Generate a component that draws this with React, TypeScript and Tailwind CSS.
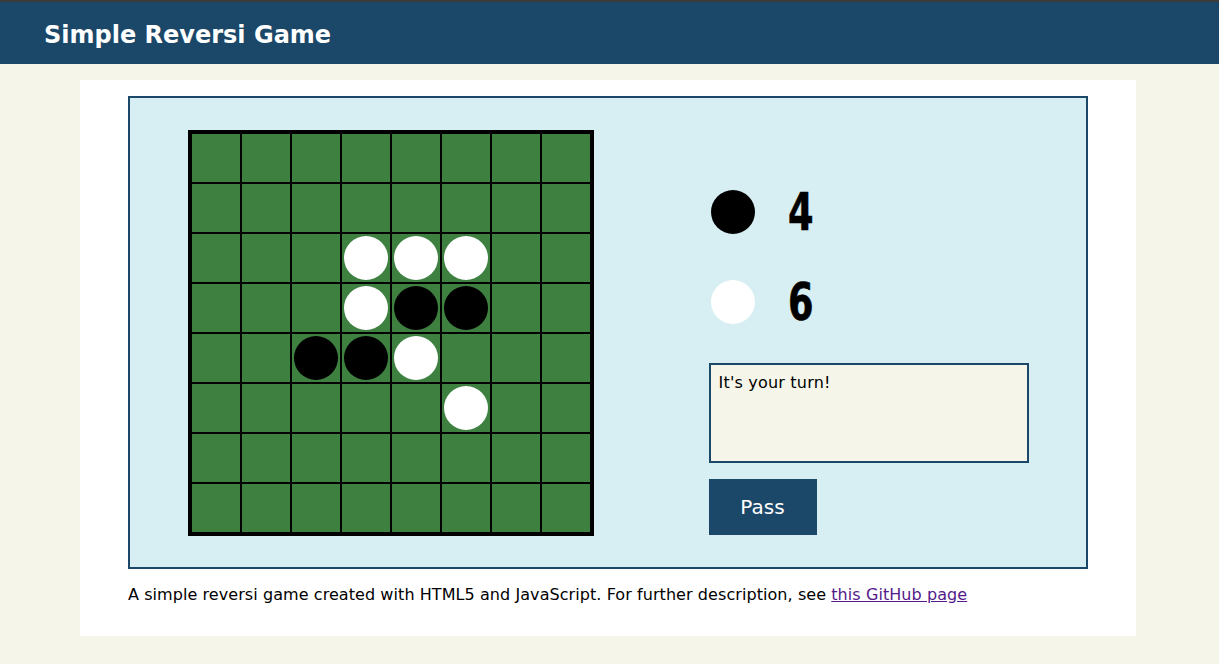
import React from "react";

const board: number[][] = [
  [0, 0, 0, 0, 0, 0, 0, 0],
  [0, 0, 0, 0, 0, 0, 0, 0],
  [0, 0, 0, 2, 2, 2, 0, 0],
  [0, 0, 0, 2, 1, 1, 0, 0],
  [0, 0, 1, 1, 2, 0, 0, 0],
  [0, 0, 0, 0, 0, 2, 0, 0],
  [0, 0, 0, 0, 0, 0, 0, 0],
  [0, 0, 0, 0, 0, 0, 0, 0],
];

const font = { fontFamily: '"DejaVu Sans", Verdana, sans-serif' };
const numFont = { fontFamily: '"DejaVu Sans Condensed", "DejaVu Sans", sans-serif' };

export default function App() {
  return (
    <div className="min-h-[664px] bg-[#f5f5e9]" style={font}>
      <div className="h-[2px] bg-[#3c3c3c]" />
      <header className="h-[62px] bg-[#1b4769] flex items-center pl-[44px] pt-[4px]">
        <h1 className="text-white font-bold text-[24px] leading-none">Simple Reversi Game</h1>
      </header>
      <div className="ml-[80px] mt-[16px] w-[1056px] h-[556px] bg-white px-[48px] pt-[16px]">
        <div className="border-2 border-[#1b4769] bg-[#d7eef3] h-[473px] flex justify-around items-start pt-[32px]">
          <div className="border-4 border-black bg-black grid grid-cols-8 gap-[2px]">
            {board.flat().map((v, i) => (
              <div key={i} className="w-[48px] h-[48px] bg-[#3d803f] flex items-center justify-center">
                {v === 1 && <div className="w-[44px] h-[44px] rounded-full bg-black" />}
                {v === 2 && <div className="w-[44px] h-[44px] rounded-full bg-white" />}
              </div>
            ))}
          </div>
          <div className="w-[320px] flex flex-col pt-[60px]">
            <div className="flex items-center h-[44px] pl-[2px]">
              <div className="w-[44px] h-[44px] rounded-full bg-black" />
              <span
                className="ml-[33px] text-[51px] font-bold leading-none text-black origin-left scale-x-[0.8] inline-block [-webkit-text-stroke:0.6px_black]"
                style={numFont}
              >
                4
              </span>
            </div>
            <div className="flex items-center h-[44px] pl-[2px] mt-[46px]">
              <div className="w-[44px] h-[44px] rounded-full bg-white" />
              <span
                className="ml-[33px] text-[51px] font-bold leading-none text-black origin-left scale-x-[0.8] inline-block [-webkit-text-stroke:0.6px_black]"
                style={numFont}
              >
                6
              </span>
            </div>
            <div className="mt-[39px] h-[100px] border-2 border-[#1b4769] bg-[#f5f5e9] px-[8px] pt-[8px] text-[16px] leading-[20px] text-black tracking-[0.2px]">
              It's your turn!
            </div>
            <button className="mt-[16px] w-[108px] h-[56px] bg-[#1b4769] text-white text-[20px]">Pass</button>
          </div>
        </div>
        <p className="mt-[14px] text-[16px] leading-[24px] text-black tracking-[0.07px]">
          A simple reversi game created with HTML5 and JavaScript. For further description, see{" "}
          <a href="#" className="text-[#551a8b] underline">this GitHub page</a>
        </p>
      </div>
    </div>
  );
}
